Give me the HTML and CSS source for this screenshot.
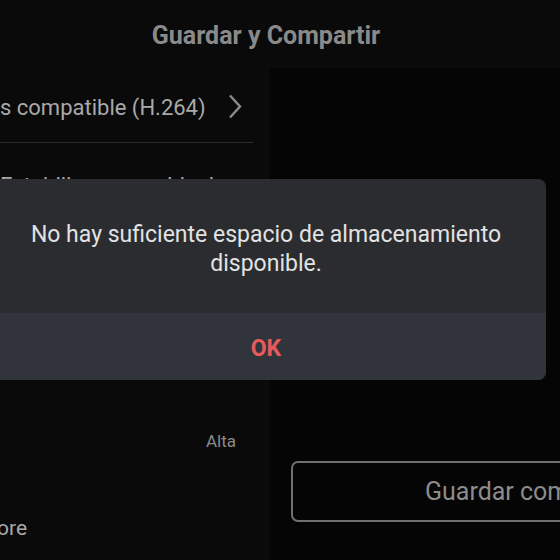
FILE: index.html
```html
<!DOCTYPE html>
<html lang="es">
<head>
<meta charset="utf-8">
<title>Guardar y Compartir</title>
<link rel="stylesheet" href="styles.css">
</head>
<body>
<div class="app">
  <header class="header">
    <h1 class="title">Guardar y Compartir</h1>
  </header>
  <main class="content">
    <section class="left">
      <div class="row row-format">
        <span class="row-text">s compatible (H.264)</span>
        <svg class="chevron" width="14" height="25" viewBox="0 0 14 25"><path d="M2 1.5 L12 12.5 L2 23.5" fill="none" stroke="#8c8c8c" stroke-width="2.4"/></svg>
      </div>
      <div class="divider"></div>
      <div class="row row-hidden">
        <span class="row-text">Estabilizar</span>
        <span class="row-value">Ideal</span>
      </div>
      <div class="row row-quality">
        <span class="quality">Alta</span>
      </div>
      <div class="row row-more">
        <span class="row-text more">ore</span>
      </div>
    </section>
    <section class="right">
      <button class="save-btn">Guardar como</button>
    </section>
  </main>
  <div class="dialog">
    <p class="dialog-msg">No hay suficiente espacio de almacenamiento disponible.</p>
    <div class="dialog-actions"><span class="ok">OK</span></div>
  </div>
</div>
</body>
</html>
```
FILE: styles.css
```css
html, body {
  margin: 0;
  padding: 0;
}
body {
  width: 560px;
  height: 560px;
  overflow: hidden;
  background: #0a0a0a;
  font-family: Roboto, "Liberation Sans", sans-serif;
}
.app {
  position: relative;
  width: 560px;
  height: 560px;
  display: flex;
  flex-direction: column;
  overflow: hidden;
}
.header {
  height: 68px;
  flex: none;
  display: flex;
  align-items: center;
  justify-content: center;
  padding: 2px 28px 0 0;
  box-sizing: border-box;
}
.title {
  margin: 0;
  font-size: 25px;
  font-weight: 700;
  color: #8a8a8a;
  white-space: nowrap;
}
.content {
  flex: 1;
  display: flex;
}
.left {
  width: 270px;
  flex: none;
  display: flex;
  flex-direction: column;
}
.row {
  display: flex;
  align-items: center;
}
.row-text {
  font-size: 22px;
  color: #a9a9a9;
  white-space: nowrap;
}
.row-format {
  height: 74px;
  padding: 4px 28px 0 0;
  box-sizing: border-box;
  justify-content: space-between;
}
.chevron {
  display: block;
  margin-top: -2px;
}
.divider {
  height: 1px;
  background: #2a2a2a;
  margin-right: 17px;
}
.row-hidden {
  padding-top: 30px;
  justify-content: space-between;
  padding-right: 56px;
}
.row-value {
  font-size: 22px;
  color: #a9a9a9;
}
.row-quality {
  margin-top: 233px;
  justify-content: flex-end;
  padding-right: 34px;
}
.quality {
  font-size: 17px;
  color: #8a8a8a;
}
.row-more {
  margin-top: 65px;
}
.more {
  margin-left: -3px;
  font-size: 21px;
}
.right {
  flex: 1;
  background: #050505;
}
.save-btn {
  display: block;
  margin: 393px 0 0 21px;
  width: 300px;
  height: 61px;
  border: 2px solid #707070;
  border-radius: 7px;
  background: transparent;
  color: #8c8c8c;
  font-family: Roboto, "Liberation Sans", sans-serif;
  font-size: 25px;
  text-align: left;
  padding: 0 0 0 132px;
  box-sizing: border-box;
  white-space: nowrap;
}
.dialog {
  position: absolute;
  left: -14px;
  top: 179px;
  width: 560px;
  height: 201px;
  border-radius: 8px;
  background: #2a2c30;
  overflow: hidden;
  display: flex;
  flex-direction: column;
}
.dialog-msg {
  margin: 0;
  height: 134px;
  box-sizing: border-box;
  padding: 41px 30px 0;
  font-size: 23px;
  line-height: 29px;
  color: #e2e2e2;
  text-align: center;
}
.dialog-actions {
  flex: 1;
  background: #31343a;
  display: flex;
  align-items: center;
  justify-content: center;
  padding-top: 3px;
}
.ok {
  font-size: 23px;
  font-weight: 700;
  color: #e65b5b;
}
```
